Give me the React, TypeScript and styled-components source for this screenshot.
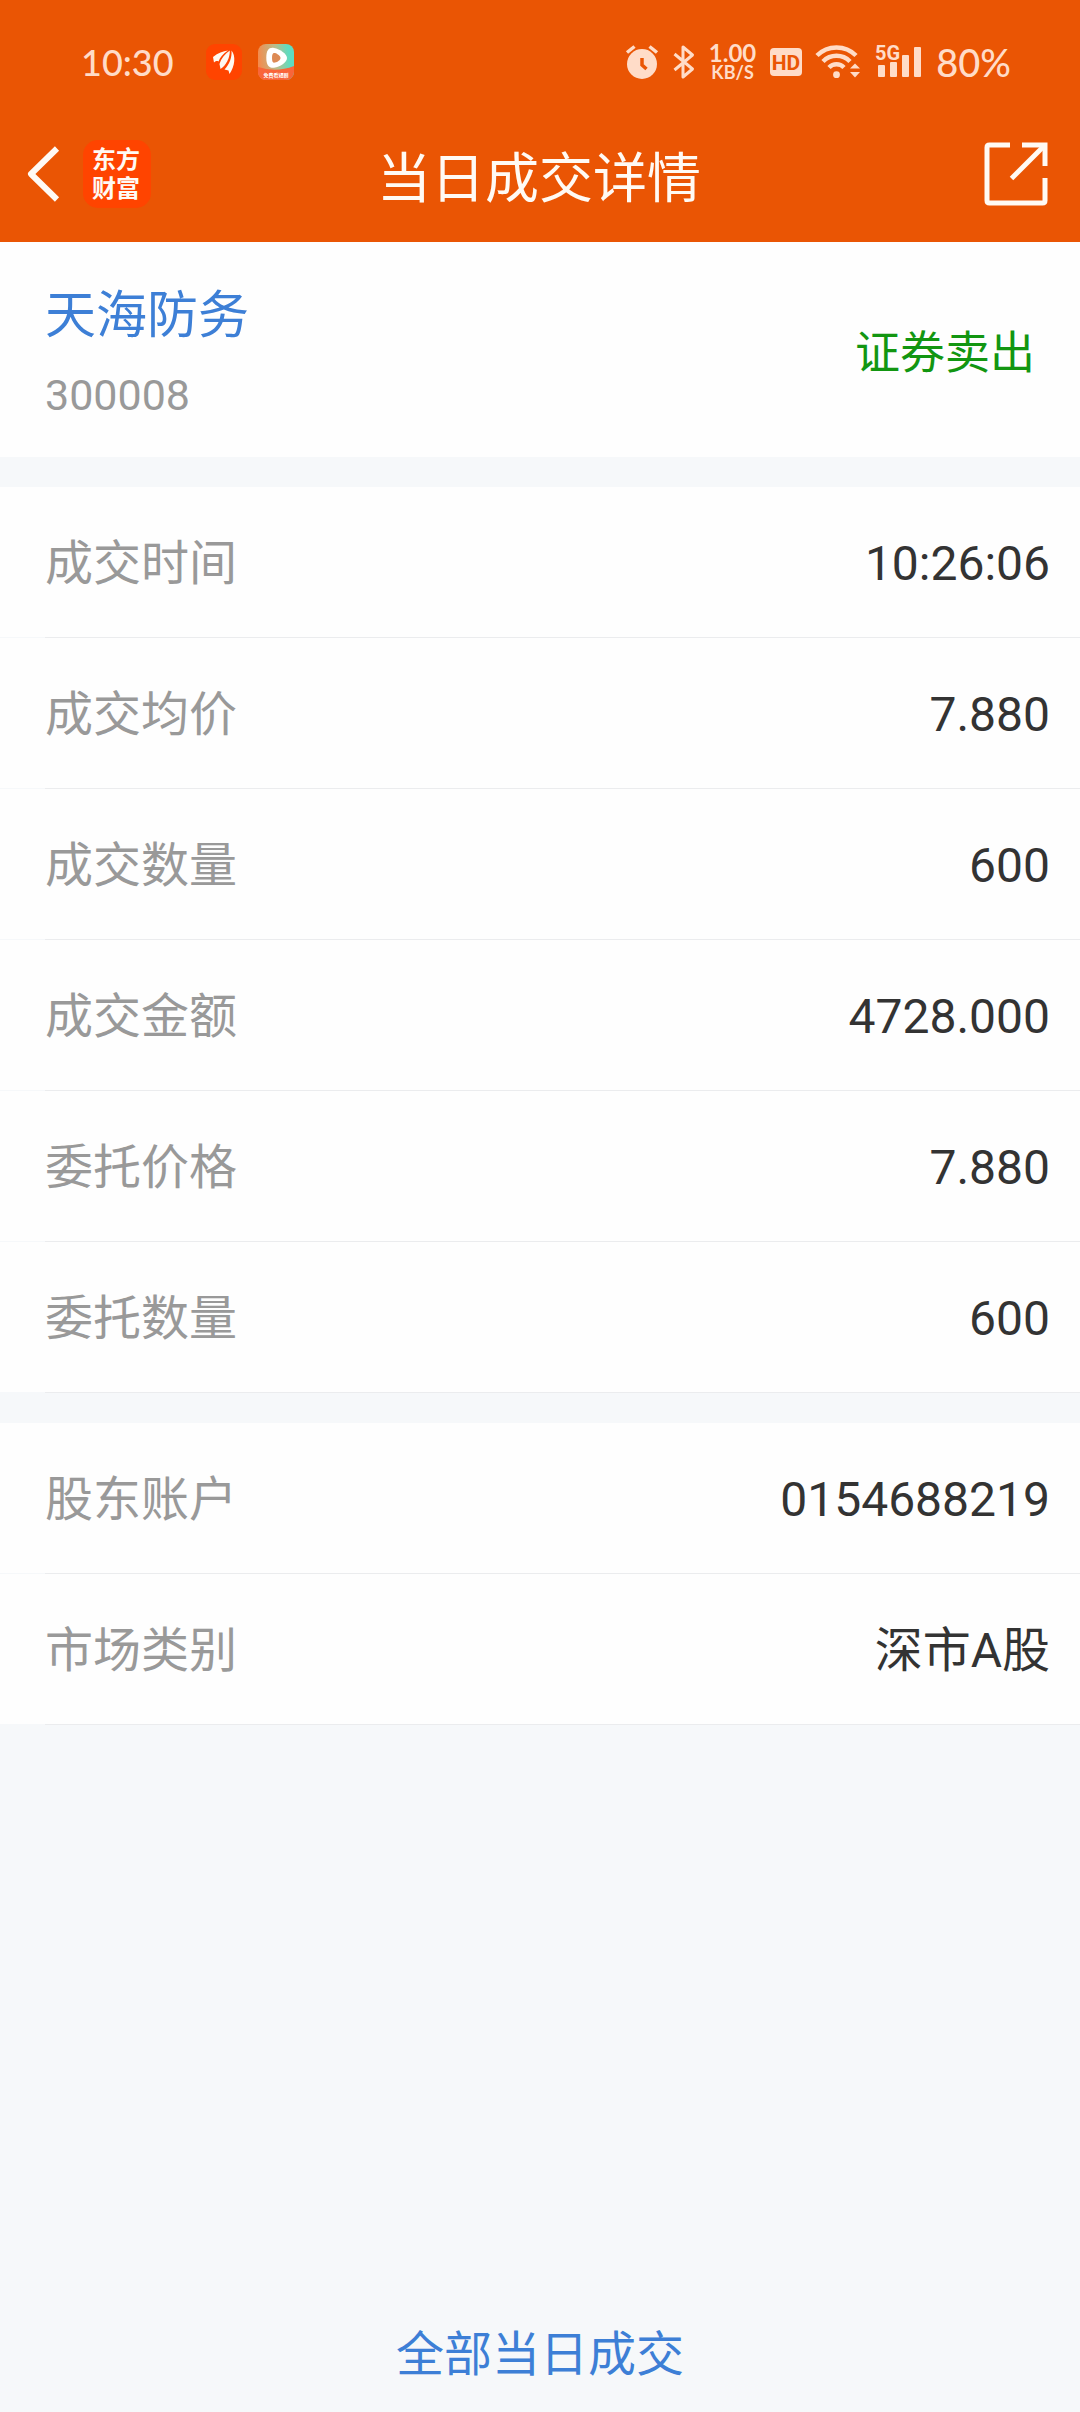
import React from 'react';
import styled, { createGlobalStyle } from 'styled-components';

const color = {
  brand: '#ea5504',
  logo: '#ff4400',
  status: '#ffdcc8',
  page: '#f6f8fa',
  card: '#fefefe',
  line: '#ebecee',
  link: '#3d7fd6',
  sell: '#129611',
  label: '#999999',
  value: '#333333',
};

const Global = createGlobalStyle`
  * { box-sizing: border-box; }
  body {
    margin: 0;
    background: ${color.page};
    font-family: Roboto, "Noto Sans CJK SC", sans-serif;
  }
  button {
    margin: 0;
    padding: 0;
    border: 0;
    background: none;
    color: inherit;
    font: inherit;
    cursor: pointer;
  }
  svg { display: block; flex: none; overflow: visible; }
`;

const Page = styled.div`
  display: flex;
  flex-direction: column;
  min-height: 100vh;
`;

const Header = styled.header`
  background: ${color.brand};
  color: #fffaf4;
`;

const StatusBar = styled.div`
  display: flex;
  align-items: center;
  justify-content: space-between;
  height: 106px;
  padding: 18px 69px 0 81px;
  color: ${color.status};
`;

const StatusGroup = styled.div<{ $gap: number }>`
  display: flex;
  align-items: center;
  gap: ${(p) => p.$gap}px;
`;

const StatusText = styled.span`
  font-family: Lato, Roboto, sans-serif;
  font-size: 36px;
  line-height: 40px;
  font-weight: 500;
`;

const Clock = styled(StatusText)`
  margin-right: 16px;
`;

const Battery = styled(StatusText)`
  font-size: 38px;
`;

const Speed = styled.span`
  display: flex;
  flex-direction: column;
  align-items: center;
  font-family: Lato, Roboto, sans-serif;
  font-weight: 700;
`;

const SpeedPart = styled.span<{ $size: number; $line: number }>`
  font-size: ${(p) => p.$size}px;
  line-height: ${(p) => p.$line}px;
`;

const NavBar = styled.nav`
  display: grid;
  grid-template-columns: 1fr auto 1fr;
  align-items: center;
  height: 136px;
  padding: 0 32px 0 26px;
`;

const NavSide = styled.div<{ $end?: boolean }>`
  display: flex;
  align-items: center;
  justify-content: ${(p) => (p.$end ? 'flex-end' : 'flex-start')};
  gap: 23px;
`;

const Title = styled.h1`
  margin: 0;
  padding: 12px 0 0 4px;
  font-size: 54px;
  line-height: 64px;
  font-weight: 400;
`;

const Logo = styled.span`
  display: grid;
  place-content: center;
  width: 68px;
  height: 68px;
  padding: 0 2px 4px 0;
  border-radius: 15px;
  background: ${color.logo};
  font-family: "Noto Sans CJK SC", sans-serif;
  font-size: 24px;
  line-height: 29px;
  font-weight: 700;
`;

const Summary = styled.section`
  display: flex;
  align-items: center;
  justify-content: space-between;
  padding: 36px 45px 32px;
  background: ${color.card};
`;

const StockName = styled.h2`
  margin: 0;
  color: ${color.link};
  font-size: 51px;
  line-height: 75px;
  font-weight: 400;
`;

const StockCode = styled.p`
  margin: 12px 0 0;
  color: ${color.label};
  font-size: 43px;
  line-height: 60px;
`;

const Side = styled.strong`
  padding-top: 4px;
  color: ${color.sell};
  font-size: 45px;
  line-height: 60px;
  font-weight: 400;
`;

const Details = styled.dl`
  margin: 30px 0 0;
`;

const Row = styled.div`
  &::after {
    content: "";
    display: block;
    height: 1px;
    margin-left: 45px;
    background: ${color.line};
  }
`;

const RowBody = styled.div`
  display: flex;
  align-items: center;
  justify-content: space-between;
  height: 150px;
  padding: 4px 30px 0 45px;
  background: ${color.card};
  font-size: 48px;
  line-height: 60px;
`;

const Label = styled.dt`
  color: ${color.label};
`;

const Value = styled.dd`
  margin: 0;
  color: ${color.value};
`;

const AllTrades = styled.button`
  && {
    margin-top: auto;
    height: 118px;
    padding-top: 4px;
    color: ${color.link};
    font-size: 48px;
    line-height: 60px;
  }
`;

const BrandIcon = () => (
  <svg width="36" height="36" viewBox="0 0 36 36" aria-hidden="true">
    <rect width="36" height="36" rx="9" fill={color.logo} />
    <g fill="#fff8f0">
      <path d="M7 13C12 9 17 7 22 6.500C17 10 14 13 12.500 17.500C11 16.800 10 17 8 18.500Z" />
      <path d="M23.800 6.500C19 10 15 14.500 13.500 20L14.500 25C20 21.500 24 14 23.800 6.500Z" />
      <path d="M25.500 6.500C30 12 29 22 23.500 30L22.500 26.500L18.500 25.500C23.500 20 26 14 25.500 6.500Z" />
    </g>
  </svg>
);

const PlayIcon = () => (
  <svg width="36" height="36" viewBox="0 0 36 36" aria-hidden="true">
    <defs>
      <linearGradient id="play" x1="0" y1="0.400" x2="1" y2="0.300">
        <stop offset="0" stopColor="#f58a4c" />
        <stop offset="0.500" stopColor="#b9bd8c" />
        <stop offset="0.850" stopColor="#5fdcc0" />
      </linearGradient>
      <clipPath id="round"><rect width="36" height="36" rx="8" /></clipPath>
    </defs>
    <g clipPath="url(#round)">
      <rect width="36" height="36" fill="url(#play)" />
      <path d="M0 23Q18 29 36 22V36H0Z" fill="#f9653a" />
      <path d="M8.300 14C8.300 6 11 3.200 16 4C22 5 29 10 29 14C29 18.500 22 23 16 23.800C11 24.300 8.300 21 8.300 14Z" fill="#fff" />
      <path d="M14 14C14 9.500 15 8.500 17 9C19.500 9.800 22.500 12 22.500 14C22.500 16 19.500 18 17 18.600C15 19 14 18 14 14Z" fill="#dd8a55" />
      <text x="18" y="33" textAnchor="middle" fontSize="5" fontWeight="700" fill="#fff" fontFamily="Noto Sans CJK SC, sans-serif">免费看短剧</text>
    </g>
  </svg>
);

const AlarmIcon = () => (
  <svg width="34" height="36" viewBox="0 0 34 36" fill="none" stroke={color.status} aria-hidden="true">
    <circle cx="17" cy="20" r="15" fill={color.status} stroke="none" />
    <path d="M2 8.500L9.500 2.500M32 8.500L24.500 2.500" strokeWidth="3.500" />
    <path d="M17 14V21L21.500 25" stroke={color.brand} strokeWidth="3.500" />
  </svg>
);

const BluetoothIcon = () => (
  <svg width="22" height="36" viewBox="0 0 22 36" fill="none" stroke={color.status} strokeWidth="3" strokeLinejoin="round" aria-hidden="true">
    <path d="M1.500 10L19.500 25L10 33V3L19.500 11L1.500 26" />
  </svg>
);

const HdIcon = () => (
  <svg width="32" height="28" viewBox="0 0 32 28" aria-hidden="true">
    <rect width="32" height="28" rx="4" fill={color.status} />
    <text x="16" y="22" textAnchor="middle" fontSize="21" fontWeight="700" fill={color.brand} fontFamily="Roboto, sans-serif">HD</text>
  </svg>
);

const WifiIcon = () => (
  <svg width="45" height="36" viewBox="0 0 45 36" fill="none" stroke={color.status} aria-hidden="true">
    <g strokeWidth="4.500">
      <path d="M1 11.500A27.500 27.500 0 0 1 40 11.500" />
      <path d="M7 17.500A19 19 0 0 1 34 17.500" />
      <path d="M13 23.500A10.500 10.500 0 0 1 28 23.500" />
    </g>
    <g fill={color.status} stroke="none">
      <circle cx="20.500" cy="30.700" r="3.400" />
      <path d="M34 24.500L39 19.500L44 24.500Z" />
      <path d="M34 28L39 33.500L44 28Z" />
    </g>
  </svg>
);

const SignalIcon = () => (
  <svg width="47" height="36" viewBox="0 0 47 36" fill={color.status} aria-hidden="true">
    <text x="0" y="16" fontSize="20" fontWeight="700" fontFamily="Roboto, sans-serif">5G</text>
    <rect x="3" y="21" width="7" height="12" rx="1" />
    <rect x="15" y="18" width="7" height="15" rx="1" />
    <rect x="27" y="11" width="7" height="22" rx="1" />
    <rect x="39" y="3" width="7" height="30" rx="1" />
  </svg>
);

const BackIcon = () => (
  <svg width="34" height="56" viewBox="0 0 34 56" fill="none" stroke="#fffaf4" strokeWidth="6" aria-hidden="true">
    <path d="M31 2.500L5 28L31 53.500" strokeLinejoin="round" />
  </svg>
);

const ShareIcon = () => (
  <svg width="64" height="64" viewBox="0 0 64 64" fill="none" stroke="#fffaf4" strokeWidth="5" aria-hidden="true">
    <path d="M26 3H5.500Q3 3 3 5.500V58.500Q3 61 5.500 61H58.500Q61 61 61 58.500V36" />
    <path d="M38 3H61V24" />
    <path d="M60 4L27.500 36.500" />
  </svg>
);

type Item = { label: string; value: string };

const trade: Item[] = [
  { label: '成交时间', value: '10:26:06' },
  { label: '成交均价', value: '7.880' },
  { label: '成交数量', value: '600' },
  { label: '成交金额', value: '4728.000' },
  { label: '委托价格', value: '7.880' },
  { label: '委托数量', value: '600' },
];

const account: Item[] = [
  { label: '股东账户', value: '0154688219' },
  { label: '市场类别', value: '深市A股' },
];

const DetailList = ({ items }: { items: Item[] }) => (
  <Details>
    {items.map((item) => (
      <Row key={item.label}>
        <RowBody>
          <Label>{item.label}</Label>
          <Value>{item.value}</Value>
        </RowBody>
      </Row>
    ))}
  </Details>
);

export default function App() {
  return (
    <Page lang="zh-CN">
      <Global />
      <Header>
        <StatusBar>
          <StatusGroup $gap={16}>
            <Clock>10:30</Clock>
            <BrandIcon />
            <PlayIcon />
          </StatusGroup>
          <StatusGroup $gap={14}>
            <AlarmIcon />
            <BluetoothIcon />
            <Speed>
              <SpeedPart $size={24} $line={20}>1.00</SpeedPart>
              <SpeedPart $size={18} $line={18}>KB/S</SpeedPart>
            </Speed>
            <HdIcon />
            <WifiIcon />
            <SignalIcon />
            <Battery>80%</Battery>
          </StatusGroup>
        </StatusBar>
        <NavBar>
          <NavSide>
            <button type="button" aria-label="返回"><BackIcon /></button>
            <Logo>
              <span>东方</span>
              <span>财富</span>
            </Logo>
          </NavSide>
          <Title>当日成交详情</Title>
          <NavSide $end>
            <button type="button" aria-label="分享"><ShareIcon /></button>
          </NavSide>
        </NavBar>
      </Header>
      <Summary>
        <div>
          <StockName>天海防务</StockName>
          <StockCode>300008</StockCode>
        </div>
        <Side>证券卖出</Side>
      </Summary>
      <DetailList items={trade} />
      <DetailList items={account} />
      <AllTrades type="button">全部当日成交</AllTrades>
    </Page>
  );
}
